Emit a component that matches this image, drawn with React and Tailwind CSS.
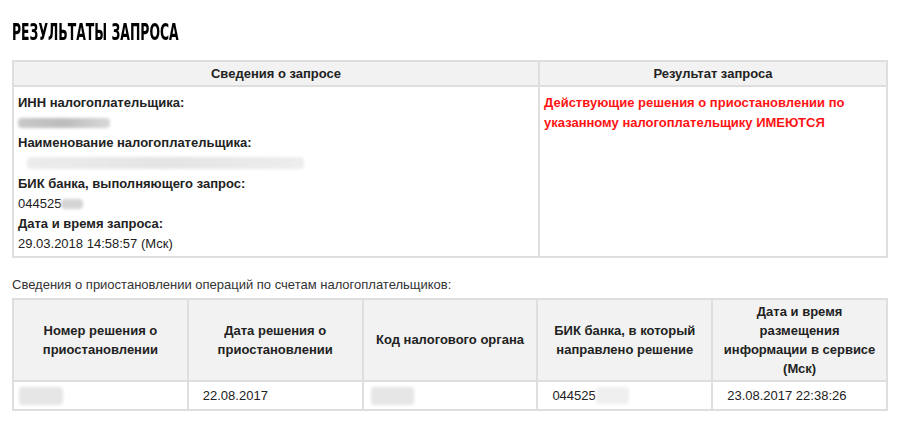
import React from 'react';

function Blur({ className }) {
  return <span className={`inline-block align-middle rounded-sm blur-[1.5px] ${className}`}></span>;
}

const cols = [
  'Номер решения о приостановлении',
  'Дата решения о приостановлении',
  'Код налогового органа',
  'БИК банка, в который направлено решение',
  'Дата и время размещения информации в сервисе (Мск)',
];

export default function App() {
  return (
    <div className="w-[900px] h-[430px] bg-white text-[#222] text-[13px] font-['Arial','Liberation_Sans',sans-serif] overflow-hidden">
      <div className="px-3 pt-[20px]">
        {/* Title */}
        <div className="h-[40px]">
          <h1 className="leading-[24px] text-[23px] font-bold text-black uppercase font-['DejaVu_Sans_Condensed','Liberation_Sans_Narrow',sans-serif] origin-left [transform:scaleX(0.6)] inline-block whitespace-nowrap">
            Результаты запроса
          </h1>
        </div>

        {/* Request info */}
        <table className="w-[876px] border-collapse border-2 border-[#dedede] table-fixed">
          <thead>
            <tr className="bg-[#f2f2f2] h-[25px]">
              <th className="w-[526px] border-2 border-[#dedede] font-bold text-center align-middle">Сведения о запросе</th>
              <th className="border-2 border-[#dedede] font-bold text-center align-middle">Результат запроса</th>
            </tr>
          </thead>
          <tbody>
            <tr className="h-[171px]">
              <td className="border-2 border-[#dedede] align-top px-[4px] pt-[6px] leading-[20px]">
                <div className="font-bold">ИНН налогоплательщика:</div>
                <div className="h-[20px] flex items-center"><Blur className="w-[92px] h-[10px] bg-gradient-to-r from-[#c8c8c8] via-[#bdbdbd] to-[#d8d8d8]" /></div>
                <div className="font-bold">Наименование налогоплательщика:</div>
                <div className="h-[20px] flex items-center pl-[9px]"><Blur className="w-[277px] h-[12px] bg-gradient-to-r from-[#ececec] via-[#e4e4e4] to-[#ededed]" /></div>
                <div className="font-bold mt-[1px]">БИК банка, выполняющего запрос:</div>
                <div className="flex items-center">044525<Blur className="w-[22px] h-[10px] bg-[#d4d4d4]" /></div>
                <div className="font-bold">Дата и время запроса:</div>
                <div>29.03.2018 14:58:57 (Мск)</div>
              </td>
              <td className="border-2 border-[#dedede] align-top px-[4px] pt-[6px] leading-[20px] font-bold text-[#ff1414]">
                Действующие решения о приостановлении по указанному налогоплательщику ИМЕЮТСЯ
              </td>
            </tr>
          </tbody>
        </table>

        <p className="mt-[19px] mb-[5px] leading-[16px] text-[#333]">
          Сведения о приостановлении операций по счетам налогоплательщиков:
        </p>

        {/* Suspension table */}
        <table className="w-[876px] border-collapse border-2 border-[#dedede] table-fixed">
          <thead>
            <tr className="bg-[#f2f2f2] h-[82px]">
              {cols.map((c) => (
                <th key={c} className="border-2 border-[#dedede] font-bold text-center align-middle leading-[19px] px-[4px] pb-[1px]">
                  {c}
                </th>
              ))}
            </tr>
          </thead>
          <tbody>
            <tr className="h-[29px]">
              <td className="border-2 border-[#dedede] px-[5px]">
                <Blur className="w-[44px] h-[18px] bg-[#e6e6e6]" />
              </td>
              <td className="border-2 border-[#dedede] px-[14px]">22.08.2017</td>
              <td className="border-2 border-[#dedede] px-[7px]">
                <Blur className="w-[43px] h-[18px] bg-[#e6e6e6]" />
              </td>
              <td className="border-2 border-[#dedede] px-[14px]">
                <span className="inline-flex items-center">044525<Blur className="w-[33px] h-[17px] bg-[#efefef]" /></span>
              </td>
              <td className="border-2 border-[#dedede] px-[14px]">23.08.2017 22:38:26</td>
            </tr>
          </tbody>
        </table>
      </div>
    </div>
  );
}
